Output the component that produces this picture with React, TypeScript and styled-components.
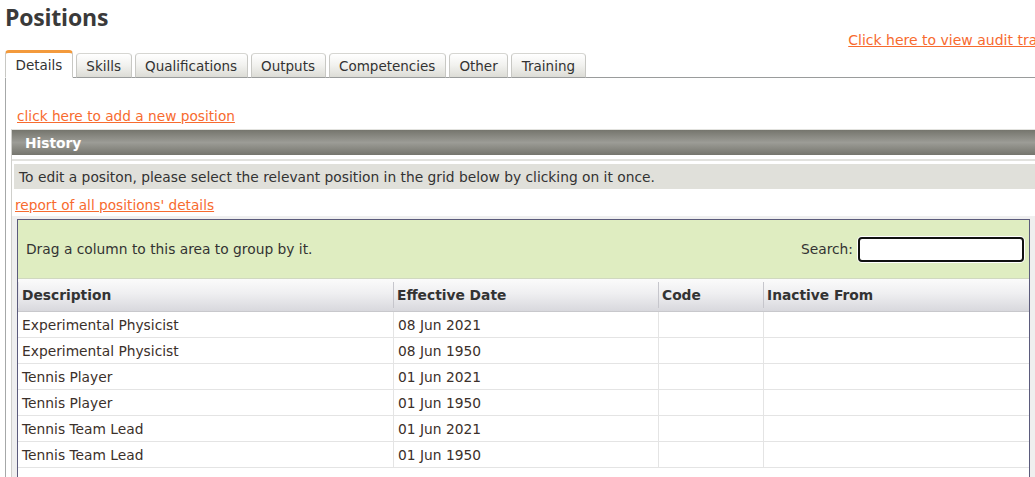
import React from 'react';
import styled, { createGlobalStyle } from 'styled-components';

const GlobalStyle = createGlobalStyle`
  html, body {
    margin: 0;
    padding: 0;
    background: #ffffff;
    overflow: hidden;
  }
  body {
    font-family: "DejaVu Sans", Verdana, sans-serif;
    font-size: 13.8px;
    color: #333333;
  }
`;

const Page = styled.div`
  width: 1040px;
  padding-left: 5px;
`;

const Title = styled.h1`
  margin: 0;
  height: 30px;
  line-height: 34px;
  font-family: "Open Sans", "Liberation Sans", sans-serif;
  font-size: 23px;
  font-weight: 700;
  color: #3a3a3a;
  letter-spacing: -0.2px;
`;

const AuditRow = styled.div`
  height: 20px;
  display: flex;
  justify-content: flex-end;
  align-items: center;
`;

const OrangeLink = styled.a`
  color: #f76b2f;
  text-decoration: underline;
  font-size: 13.7px;
  cursor: pointer;
  white-space: nowrap;
`;

const AuditLink = styled(OrangeLink)`
  font-size: 14px;
`;

const TabBar = styled.div`
  display: flex;
  align-items: flex-end;
  gap: 3px;
  height: 27px;
  border-bottom: 1px solid #9a9c9c;
`;

const Tab = styled.div<{ $active?: boolean }>`
  box-sizing: border-box;
  height: ${({ $active }) => ($active ? '28px' : '25px')};
  margin-bottom: -1px;
  padding: 0 9.5px;
  display: flex;
  align-items: center;
  font-size: 13.5px;
  color: #333333;
  border: 1px solid #c8c8c4;
  border-bottom: ${({ $active }) => ($active ? '1px solid #ffffff' : '1px solid #9a9c9c')};
  border-top: ${({ $active }) => ($active ? '3px solid #f39a3c' : '1px solid #d6d6d2')};
  border-radius: 4px 4px 0 0;
  background: ${({ $active }) =>
    $active ? '#ffffff' : 'linear-gradient(to bottom, #ffffff 0%, #f1f1ee 50%, #dcdcd6 100%)'};
  padding-top: ${({ $active }) => ($active ? '0' : '1px')};
`;

const Panel = styled.div`
  border-left: 1px solid #a6a8a8;
  padding: 27px 0 0 5px;
  height: 420px;
`;

const AddLink = styled(OrangeLink)`
  display: inline-block;
  margin-left: 6px;
  line-height: 22px;
`;

const Section = styled.div`
  margin-top: 2px;
  border-left: 1px solid #cfcfcb;
  border-top: 1px solid #e2e2de;
`;

const SectionHeader = styled.div`
  height: 25px;
  display: flex;
  align-items: center;
  padding-left: 13px;
  color: #ffffff;
  font-weight: 700;
  background: linear-gradient(to bottom, #75756d 0%, #9c9c96 50%, #75756d 100%);
`;

const SectionBody = styled.div`
  padding-top: 4px;
`;

const Hint = styled.div`
  border-top: 2px solid #e2e2de;
  padding-top: 3px;
`;

const HintBox = styled.div`
  margin-left: 2px;
  height: 25px;
  display: flex;
  align-items: center;
  padding-left: 5px;
  background: #e0e0da;
  color: #333333;
`;

const ReportLink = styled(OrangeLink)`
  display: inline-block;
  margin: 6px 0 0 3px;
  line-height: 20px;
`;

const GridWrap = styled.div`
  margin-top: 1px;
  background: #efefef;
  padding: 3px 0 0 5px;
  height: 300px;
`;

const Grid = styled.div`
  width: 1011px;
  border: 1px solid #5b5b7c;
  border-bottom: none;
  background: #ffffff;
  height: 100%;
`;

const GroupArea = styled.div`
  height: 58px;
  display: flex;
  align-items: center;
  justify-content: space-between;
  padding: 0 5px 0 8px;
  background: #dfedc1;
  border-bottom: 1px solid #d0d8c0;
  color: #333333;
`;

const SearchBox = styled.label`
  display: flex;
  align-items: center;
  gap: 5px;
`;

const SearchInput = styled.input`
  box-sizing: border-box;
  width: 166px;
  height: 25px;
  border: 2px solid #111111;
  border-radius: 4px;
  background: #ffffff;
  box-shadow: 0 0 0 1px #ffffff;
  outline: none;
`;

const Row = styled.div<{ $head?: boolean }>`
  display: grid;
  grid-template-columns: 375px 265px 105px 1fr;
  height: ${({ $head }) => ($head ? '33px' : '26px')};
  box-sizing: border-box;
  border-bottom: 1px solid ${({ $head }) => ($head ? '#c8c8cc' : '#e4e4e4')};
  background: ${({ $head }) =>
    $head ? 'linear-gradient(to bottom, #fbfbfb 0%, #efeff1 45%, #d8d8dd 100%)' : '#ffffff'};
`;

const HeadCell = styled.div<{ $first?: boolean }>`
  display: flex;
  align-items: center;
  padding: 0 0 1px 4px;
  font-weight: 700;
  color: #333333;
  position: relative;
  &::before {
    content: '';
    position: absolute;
    left: 0;
    top: 3px;
    bottom: 3px;
    width: 1px;
    background: ${({ $first }) => ($first ? '#e6e6ea' : '#c6c6cc')};
  }
`;

const Cell = styled.div<{ $first?: boolean }>`
  display: flex;
  align-items: center;
  padding-left: 4px;
  color: #3b302a;
  border-left: ${({ $first }) => ($first ? 'none' : '1px solid #e4e4e4')};
`;

const tabs = [
  { label: 'Details', active: true },
  { label: 'Skills' },
  { label: 'Qualifications' },
  { label: 'Outputs' },
  { label: 'Competencies' },
  { label: 'Other' },
  { label: 'Training' },
];

const positions = [
  { description: 'Experimental Physicist', date: '08 Jun 2021' },
  { description: 'Experimental Physicist', date: '08 Jun 1950' },
  { description: 'Tennis Player', date: '01 Jun 2021' },
  { description: 'Tennis Player', date: '01 Jun 1950' },
  { description: 'Tennis Team Lead', date: '01 Jun 2021' },
  { description: 'Tennis Team Lead', date: '01 Jun 1950' },
];

export default function App() {
  return (
    <>
      <GlobalStyle />
      <Page>
        <Title>Positions</Title>
        <AuditRow>
          <AuditLink>Click here to view audit trail</AuditLink>
        </AuditRow>

        <TabBar>
          {tabs.map((t) => (
            <Tab key={t.label} $active={t.active}>
              {t.label}
            </Tab>
          ))}
        </TabBar>

        <Panel>
          <AddLink>click here to add a new position</AddLink>
          <Section>
            <SectionHeader>History</SectionHeader>
            <SectionBody>
              <Hint>
                <HintBox>
                  To edit a positon, please select the relevant position in the grid below by clicking on it once.
                </HintBox>
              </Hint>
              <ReportLink>report of all positions' details</ReportLink>
              <GridWrap>
                <Grid>
                  <GroupArea>
                    <span>Drag a column to this area to group by it.</span>
                    <SearchBox>
                      Search:
                      <SearchInput type="text" />
                    </SearchBox>
                  </GroupArea>
                  <Row $head>
                    <HeadCell $first>Description</HeadCell>
                    <HeadCell>Effective Date</HeadCell>
                    <HeadCell>Code</HeadCell>
                    <HeadCell>Inactive From</HeadCell>
                  </Row>
                  {positions.map((p, i) => (
                    <Row key={i}>
                      <Cell $first>{p.description}</Cell>
                      <Cell>{p.date}</Cell>
                      <Cell />
                      <Cell />
                    </Row>
                  ))}
                </Grid>
              </GridWrap>
            </SectionBody>
          </Section>
        </Panel>
      </Page>
    </>
  );
}
